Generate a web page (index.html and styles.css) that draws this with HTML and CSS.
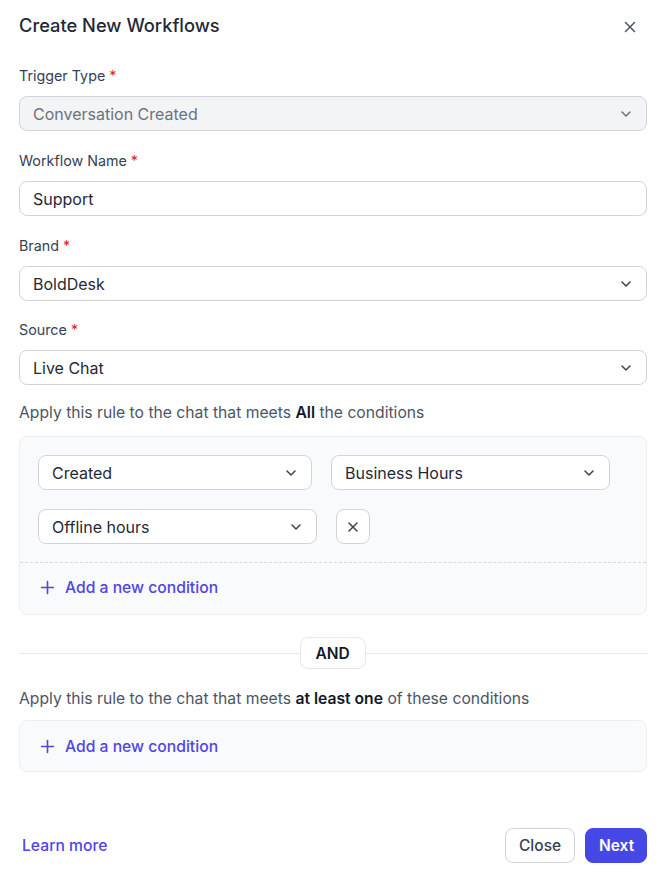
FILE: index.html
```html
<!DOCTYPE html>
<html>
<head>
<meta charset="utf-8">
<link rel="stylesheet" href="styles.css">
</head>
<body>
<div class="dialog">
  <div class="header">
    <h1 class="title">Create New Workflows</h1>
    <span class="close-x"><svg width="14" height="14" viewBox="0 0 14 14"><path d="M2.5 2.5l9 9M11.5 2.5l-9 9" stroke="#4b5563" stroke-width="1.5" stroke-linecap="round"/></svg></span>
  </div>

  <div class="field">
    <div class="label">Trigger Type <span class="req">*</span></div>
    <div class="control disabled"><span>Conversation Created</span><svg class="chev" width="16" height="16" viewBox="0 0 16 16"><path d="M4 6l4 4 4-4" fill="none" stroke="#6b7280" stroke-width="1.5" stroke-linecap="round" stroke-linejoin="round"/></svg></div>
  </div>

  <div class="field">
    <div class="label">Workflow Name <span class="req">*</span></div>
    <div class="control"><span>Support</span></div>
  </div>

  <div class="field">
    <div class="label">Brand <span class="req">*</span></div>
    <div class="control"><span>BoldDesk</span><svg class="chev" width="16" height="16" viewBox="0 0 16 16"><path d="M4 6l4 4 4-4" fill="none" stroke="#374151" stroke-width="1.5" stroke-linecap="round" stroke-linejoin="round"/></svg></div>
  </div>

  <div class="field">
    <div class="label">Source <span class="req">*</span></div>
    <div class="control"><span>Live Chat</span><svg class="chev" width="16" height="16" viewBox="0 0 16 16"><path d="M4 6l4 4 4-4" fill="none" stroke="#374151" stroke-width="1.5" stroke-linecap="round" stroke-linejoin="round"/></svg></div>
  </div>

  <p class="rule-text">Apply this rule to the chat that meets <b>All</b> the conditions</p>
  <div class="cond-box">
    <div class="cond-rows">
      <div class="cond-row">
        <div class="control w274"><span>Created</span><svg class="chev" width="16" height="16" viewBox="0 0 16 16"><path d="M4 6l4 4 4-4" fill="none" stroke="#374151" stroke-width="1.5" stroke-linecap="round" stroke-linejoin="round"/></svg></div>
        <div class="control w279"><span>Business Hours</span><svg class="chev" width="16" height="16" viewBox="0 0 16 16"><path d="M4 6l4 4 4-4" fill="none" stroke="#374151" stroke-width="1.5" stroke-linecap="round" stroke-linejoin="round"/></svg></div>
      </div>
      <div class="cond-row">
        <div class="control w279"><span>Offline hours</span><svg class="chev" width="16" height="16" viewBox="0 0 16 16"><path d="M4 6l4 4 4-4" fill="none" stroke="#374151" stroke-width="1.5" stroke-linecap="round" stroke-linejoin="round"/></svg></div>
        <div class="remove-btn"><svg width="12" height="12" viewBox="0 0 12 12"><path d="M2 2l8 8M10 2l-8 8" stroke="#374151" stroke-width="1.5" stroke-linecap="round"/></svg></div>
      </div>
    </div>
    <div class="add-cond dashed"><svg width="15" height="15" viewBox="0 0 14 14"><path d="M7 1.5v11M1.5 7h11" stroke="#4f46e5" stroke-width="1.5" stroke-linecap="round"/></svg><span>Add a new condition</span></div>
  </div>

  <div class="and-divider"><span class="and-pill">AND</span></div>

  <p class="rule-text second">Apply this rule to the chat that meets <b>at least one</b> of these conditions</p>
  <div class="cond-box">
    <div class="add-cond"><svg width="15" height="15" viewBox="0 0 14 14"><path d="M7 1.5v11M1.5 7h11" stroke="#4f46e5" stroke-width="1.5" stroke-linecap="round"/></svg><span>Add a new condition</span></div>
  </div>

  <div class="footer">
    <a class="learn">Learn more</a>
    <div class="actions">
      <button class="btn btn-close">Close</button>
      <button class="btn btn-next">Next</button>
    </div>
  </div>
</div>
</body>
</html>
```

FILE: styles.css
```css
* { box-sizing: border-box; }
html, body { margin: 0; padding: 0; background: #ffffff; }
body {
  font-family: Inter, "Noto Sans", "Liberation Sans", sans-serif;
  color: #1f2937;
  width: 668px;
}
.dialog {
  padding: 12px 21px 0 19px;
}
.header {
  display: flex;
  justify-content: space-between;
  align-items: center;
  height: 26px;
  margin-bottom: 29px;
}
.title {
  margin: 0;
  font-size: 18.3px;
  font-weight: 500;
  color: #1f2937;
  line-height: 26px;
}
.close-x {
  display: flex;
  margin-right: 10px;
  margin-top: 3px;
}
.field { margin-bottom: 21px; }
.field:nth-of-type(4) { margin-bottom: 20px; }
.label {
  font-size: 14.3px;
  color: #374151;
  line-height: 18px;
  margin-bottom: 11px;
}
.req { color: #dc2626; }
.control {
  height: 35px;
  border: 1px solid #d1d5db;
  border-radius: 8px;
  background: #fff;
  display: flex;
  align-items: center;
  justify-content: space-between;
  padding: 0 12px 0 13px;
  font-size: 16px;
  color: #1f2937;
}
.control.disabled {
  background: #f3f4f6;
  color: #6b7280;
}
.chev { flex: none; }
.rule-text {
  margin: -2px 0 14px;
  font-size: 15.7px;
  color: #4b5563;
  line-height: 18px;
}
.rule-text b { color: #111827; font-weight: 600; }
.rule-text.second { margin: 21px 0 12px; }
.cond-box {
  background: #f9fafb;
  border: 1px solid #eceef1;
  border-radius: 8px;
}
.cond-rows {
  padding: 18px;
  display: flex;
  flex-direction: column;
  gap: 19px;
}
.cond-row {
  display: flex;
  gap: 19px;
}
.w274 { width: 274px; }
.w279 { width: 279px; }
.remove-btn {
  width: 34px;
  height: 35px;
  border: 1px solid #d1d5db;
  border-radius: 8px;
  background: #fff;
  display: flex;
  align-items: center;
  justify-content: center;
}
.add-cond {
  display: flex;
  align-items: center;
  gap: 10px;
  height: 50px;
  padding: 0 20px;
  color: #4f46e5;
  font-size: 15.7px;
  font-weight: 500;
}
.add-cond.dashed {
  border-top: 1px dashed #d5d9de;
  height: 52px;
  padding-bottom: 2px;
}
.and-divider {
  position: relative;
  height: 32px;
  margin-top: 22px;
  display: flex;
  justify-content: center;
  align-items: center;
}
.and-divider::before {
  content: "";
  position: absolute;
  left: 0;
  right: 0;
  top: 16px;
  border-top: 1px solid #e5e7eb;
}
.and-pill {
  position: relative;
  background: #fff;
  border: 1px solid #e5e7eb;
  border-radius: 8px;
  width: 66px;
  height: 32px;
  display: flex;
  align-items: center;
  justify-content: center;
  font-size: 15.5px;
  font-weight: 600;
  color: #111827;
  margin-right: 1px;
}
.footer {
  display: flex;
  justify-content: space-between;
  align-items: center;
  margin-top: 56px;
}
.learn {
  color: #4f46e5;
  font-size: 15.7px;
  font-weight: 500;
  margin-left: 3px;
  cursor: pointer;
}
.actions { display: flex; gap: 10px; }
.btn {
  height: 35px;
  border-radius: 8px;
  font-family: inherit;
  font-size: 15.5px;
  font-weight: 500;
  padding: 0 13px;
}
.btn-close {
  background: #fff;
  border: 1px solid #d1d5db;
  color: #374151;
  width: 70px;
}
.btn-next {
  background: #4548e6;
  border: 1px solid #4548e6;
  color: #fff;
  font-weight: 600;
  width: 62px;
}
```
